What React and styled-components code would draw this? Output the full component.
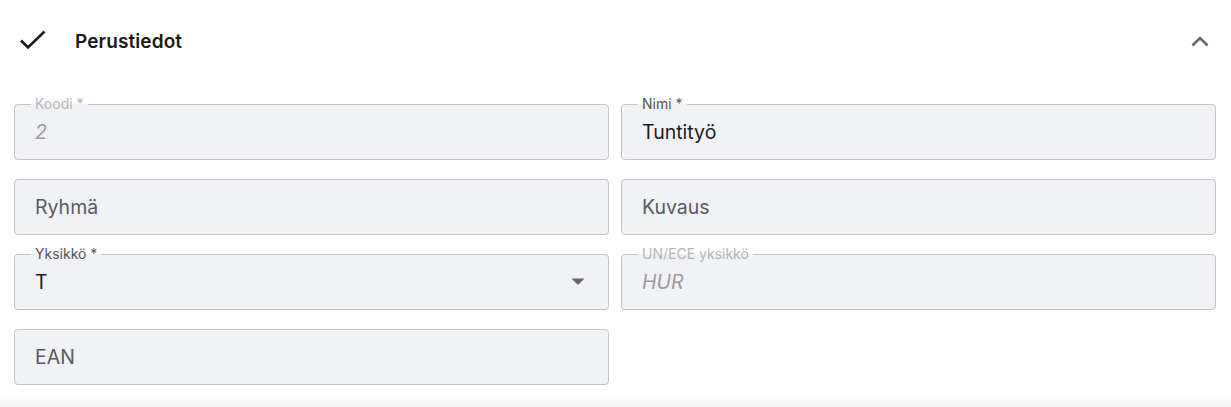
import React from "react";
import styled, { createGlobalStyle } from "styled-components";

const Global = createGlobalStyle`
  html, body { margin: 0; padding: 0; background: #fff; }
  body { font-family: Inter, "Noto Sans", sans-serif; }
`;

const Panel = styled.section`
  width: 1231px;
  box-sizing: border-box;
  background: #fff;
`;

const Header = styled.header`
  height: 82px;
  display: flex;
  align-items: center;
  padding: 0 22px 0 18px;
  box-sizing: border-box;
`;

const HeaderTitle = styled.h2`
  margin: 0 0 0 27px;
  flex: 1;
  font-size: 19px;
  font-weight: 600;
  color: #1a1a1a;
  letter-spacing: 0.1px;
`;

const IconBox = styled.span`
  display: inline-flex;
  align-items: center;
  justify-content: center;
`;

const Grid = styled.div`
  display: grid;
  grid-template-columns: 1fr 1fr;
  column-gap: 12px;
  row-gap: 19px;
  padding: 22px 15px 5px 14px;
`;

const Field = styled.div`
  position: relative;
  height: 56px;
  background: #f1f2f6;
  border-radius: 4px;
  display: flex;
  align-items: center;
  padding: 0 21px;
  box-sizing: border-box;
`;

const Outline = styled.fieldset`
  position: absolute;
  left: 0;
  right: 0;
  bottom: 0;
  top: ${(p) => (p.$notched ? "-7px" : "0")};
  margin: 0;
  padding: 0 0 0 16px;
  border: 1px solid #c4c4c8;
  border-radius: 4px;
  pointer-events: none;
`;

const Legend = styled.legend`
  padding: 0 4px;
  font-size: 14px;
  line-height: 14px;
  color: ${(p) => (p.$disabled ? "#b4b4b8" : "#555")};
`;

const Value = styled.span`
  font-size: 19.5px;
  color: ${(p) => (p.$disabled ? "#9a9a9e" : p.$placeholder ? "#5a5a5e" : "#1c1c1c")};
  font-style: ${(p) => (p.$disabled ? "italic" : "normal")};
  flex: 1;
`;

const Shade = styled.div`
  height: 17px;
  background: linear-gradient(#fff, #f5f5f5);
`;

const Caret = () => (
  <svg width="14" height="8" viewBox="0 0 14 8">
    <path d="M0.5 0.5 L13.5 0.5 L7 7 Z" fill="#666" />
  </svg>
);

function TextField({ label, value, disabled, placeholder, select }) {
  return (
    <Field>
      <Value $disabled={disabled} $placeholder={!!placeholder}>
        {value || placeholder}
      </Value>
      {select && (
        <IconBox style={{ marginRight: 3 }}>
          <Caret />
        </IconBox>
      )}
      <Outline $notched={!!label}>
        {label && <Legend $disabled={disabled}>{label}</Legend>}
      </Outline>
    </Field>
  );
}

export default function App() {
  return (
    <>
      <Global />
      <Panel>
        <Header>
          <IconBox>
            <svg width="30" height="22" viewBox="0 0 30 22">
              <polyline points="3,10.5 10,17.5 26.5,1.5" fill="none" stroke="#1a1a1a" strokeWidth="2.6" />
            </svg>
          </IconBox>
          <HeaderTitle>Perustiedot</HeaderTitle>
          <IconBox>
            <svg width="18" height="12" viewBox="0 0 18 12">
              <polyline points="1.5,10.5 9,3 16.5,10.5" fill="none" stroke="#6b6b6b" strokeWidth="2.6" />
            </svg>
          </IconBox>
        </Header>
        <Grid>
          <TextField label="Koodi *" value="2" disabled />
          <TextField label="Nimi *" value="Tuntityö" />
          <TextField placeholder="Ryhmä" />
          <TextField placeholder="Kuvaus" />
          <TextField label="Yksikkö *" value="T" select />
          <TextField label="UN/ECE yksikkö" value="HUR" disabled />
          <TextField placeholder="EAN" />
        </Grid>
        <Shade />
      </Panel>
    </>
  );
}
